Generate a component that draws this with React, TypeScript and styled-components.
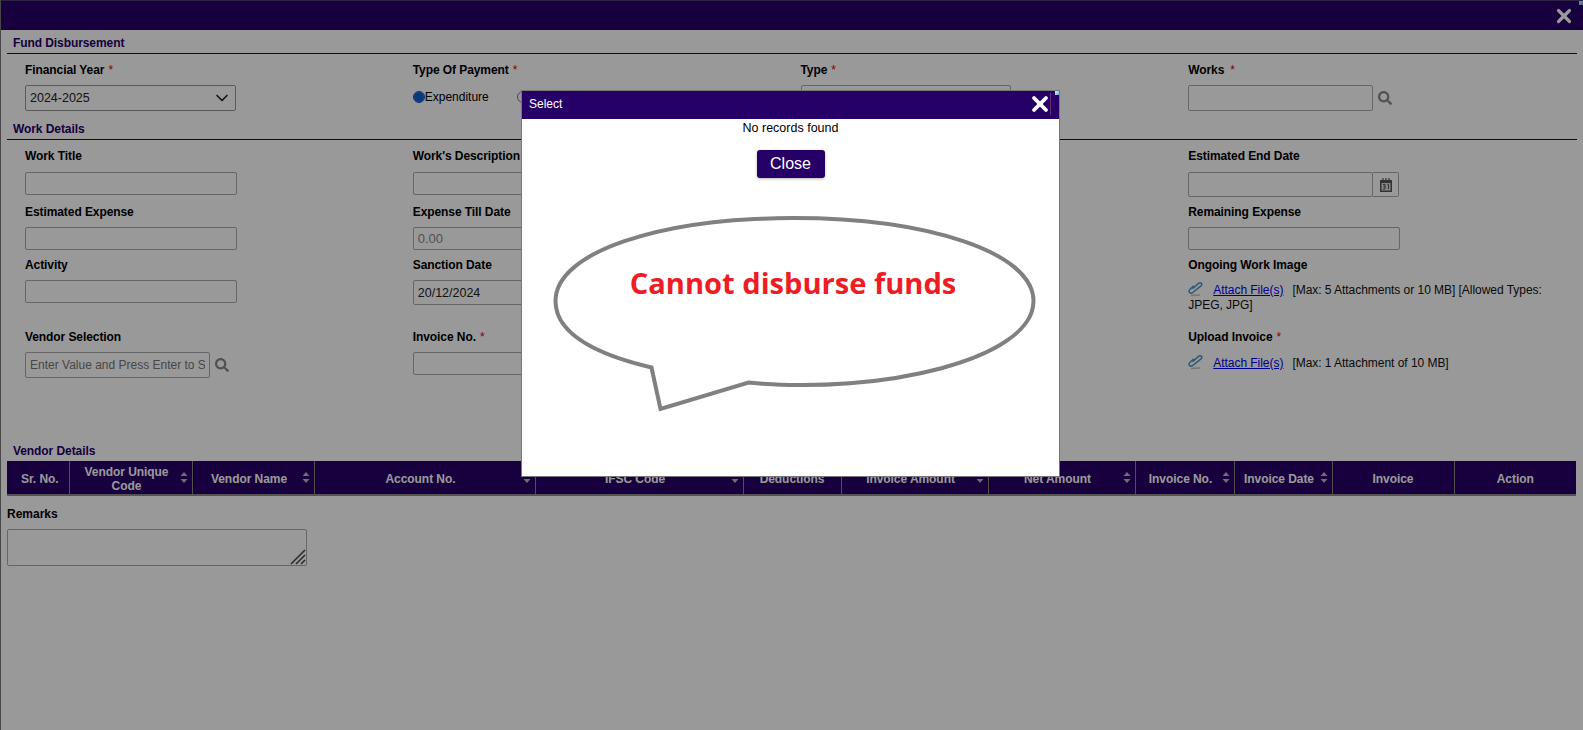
import React from 'react'
import styled, { createGlobalStyle } from 'styled-components'
import { ChevronDown, X } from 'lucide-react'
import { FaSearch } from 'react-icons/fa'

const GlobalStyle = createGlobalStyle`
  html, body { margin: 0; padding: 0; background: #fff; overflow: hidden; }
  * { box-sizing: border-box; }
  body { font-family: "Liberation Sans", Arial, sans-serif; font-size: 12px; color: #000; }
`

const Page = styled.div`
  height: 730px;
  border-left: 1px solid #777;
`

const TopBar = styled.div`
  position: relative;
  height: 30px;
  background: #270067;
  border-top: 1px solid #4a3a70;
  display: flex;
  align-items: center;
  justify-content: flex-end;
  padding-right: 8px;
  color: #fff;
`

const Body = styled.div`
  padding: 0 6px;
`

const SectionTitle = styled.div<{ $height: number; $ruled?: boolean }>`
  height: ${(p) => p.$height}px;
  display: flex;
  align-items: flex-end;
  padding: 0 0 3px 6px;
  font-weight: bold;
  letter-spacing: -0.08px;
  color: #270067;
  line-height: 14px;
  border-bottom: ${(p) => (p.$ruled ? '1px solid #270067' : 'none')};
`

const FieldRow = styled.div<{ $top: number; $height: number }>`
  display: grid;
  grid-template-columns: repeat(4, 387.75px);
  padding: ${(p) => p.$top}px 0 0 18px;
  height: ${(p) => p.$height}px;
`

const Field = styled.div`
  min-width: 0;
`

const Label = styled.label<{ $gap?: number }>`
  display: block;
  height: 15px;
  line-height: 15px;
  font-weight: bold;
  letter-spacing: -0.08px;
  margin-bottom: ${(p) => p.$gap ?? 8}px;
`

const Req = styled.span<{ $wide?: boolean }>`
  color: #d00;
  font-weight: normal;
  margin-left: ${(p) => (p.$wide ? 6 : 4)}px;
`

const Input = styled.input<{ $w?: number; $h?: number }>`
  display: block;
  width: ${(p) => p.$w ?? 212}px;
  height: ${(p) => p.$h ?? 23}px;
  border: 1px solid #aaa;
  border-radius: 2px;
  padding: 0 4px;
  font: 12.5px "Liberation Sans", Arial, sans-serif;
  color: #222;
  background: #fff;
  &::placeholder { color: #777; font-size: 12px; }
  &:disabled { color: #888; font-size: 13px; }
`

const InlineGroup = styled.div`
  display: flex;
  align-items: center;
`

const SelectBox = styled.div`
  width: 211px;
  height: 26px;
  border: 1px solid #999;
  border-radius: 2px;
  display: flex;
  align-items: center;
  justify-content: space-between;
  padding: 0 3px 0 4px;
  font-size: 12.5px;
  color: #222;
`

const RadioRow = styled.div`
  display: flex;
  align-items: center;
  height: 24px;
`

const Radio = styled.span<{ $on?: boolean }>`
  width: 12px;
  height: 12px;
  border-radius: 50%;
  flex: none;
  margin-left: ${(p) => (p.$on ? 0 : 28)}px;
  border: 1px solid ${(p) => (p.$on ? '#0a4fb0' : '#777')};
  background: ${(p) => (p.$on ? 'radial-gradient(circle, #0a5fd0 62%, #7fa8e0 72%)' : '#fff')};
`

const SearchBtn = styled.span`
  display: flex;
  margin-left: 5px;
  color: #888;
`

const DateAddon = styled.span`
  width: 26px;
  height: 25px;
  border: 1px solid #aaa;
  border-left: none;
  border-radius: 0 2px 2px 0;
  display: flex;
  align-items: center;
  justify-content: center;
  color: #555;
`

const AttachLine = styled.div`
  line-height: 15px;
  width: 375px;
  color: #111;
  letter-spacing: -0.04px;
`

const AttachLink = styled.a`
  color: #0000ee;
  text-decoration: underline;
  margin: 0 9px 0 8px;
`

const ClipMark = styled.svg`
  vertical-align: -3px;
`

const Table = styled.table`
  width: 1569px;
  height: 35px;
  table-layout: fixed;
  border-collapse: collapse;
  background: #270067;
  border-bottom: 1px solid #270067;
`

const Th = styled.th<{ $sort?: boolean }>`
  position: relative;
  height: 32px;
  padding: 2px ${(p) => (p.$sort ? 12 : 4)}px 0 4px;
  color: #fff;
  font-size: 12px;
  font-weight: bold;
  letter-spacing: -0.06px;
  line-height: 14px;
  text-align: center;
  border-right: 1px solid #88887a;
  border-bottom: 2px solid #8c8c8c;
  &:first-child { padding-left: 8px; }
  &:last-child { border-right: none; }
`

const SortMark = styled.svg`
  position: absolute;
  right: 4px;
  top: 11px;
`

const RemarksLabel = styled.div`
  margin-top: 11px;
  font-weight: bold;
  line-height: 15px;
`

const RemarksBox = styled.div`
  position: relative;
  width: 300px;
  height: 37px;
  margin-top: 7px;
`

const Remarks = styled.textarea`
  display: block;
  width: 100%;
  height: 100%;
  border: 1px solid #aaa;
  border-radius: 2px;
  background: #fff;
  resize: none;
`

const ResizeGrip = styled.svg`
  position: absolute;
  right: 1px;
  bottom: 1px;
`

const Overlay = styled.div`
  position: fixed;
  inset: 0;
  background: rgba(0, 0, 0, 0.4);
`

const Modal = styled.div`
  position: absolute;
  left: 521px;
  top: 90px;
  width: 539px;
  height: 387px;
  background: #fff;
  border: 1px solid #777;
  display: flex;
  flex-direction: column;
  align-items: center;
`

const ModalHeader = styled.div`
  align-self: stretch;
  height: 28px;
  background: #270067;
  color: #fff;
  display: flex;
  align-items: center;
  justify-content: space-between;
  padding: 0 8px 2px 7px;
  position: relative;
`

const HeaderRule = styled.span`
  height: 22px;
  border-right: 1px solid #6d2a70;
  display: flex;
  align-items: center;
  svg { margin-right: -2px; }
`

const CornerDot = styled.span`
  position: absolute;
  right: 0;
  top: 0;
  width: 4px;
  height: 4px;
  background: linear-gradient(135deg, #e4f1ff, #6aa8d8);
`

const NoRecords = styled.div`
  margin-top: 2px;
  font-size: 12.5px;
  line-height: 15px;
`

const CloseButton = styled.button`
  margin-top: 14px;
  width: 68px;
  height: 28px;
  border: none;
  border-radius: 3px;
  background: #270067;
  color: #fff;
  font: 16px "Liberation Sans", Arial, sans-serif;
  box-shadow: 0 1px 3px rgba(0, 0, 0, 0.3);
`

const Bubble = styled.div`
  position: relative;
  margin-top: 37px;
  width: 486px;
  height: 198px;
`

const BubbleShape = styled.svg`
  display: block;
  overflow: visible;
`

const BubbleText = styled.div`
  position: absolute;
  left: 5px;
  right: 0;
  top: 48px;
  text-align: center;
  font-family: "Open Sans", sans-serif;
  font-size: 29.1px;
  font-weight: 700;
  line-height: 40px;
  color: #ee1c25;
  white-space: nowrap;
`

const columns = [
  { name: 'Sr. No.', width: 62 },
  { name: 'Vendor Unique Code', width: 123, sort: true },
  { name: 'Vendor Name', width: 122, sort: true },
  { name: 'Account No.', width: 221, sort: true },
  { name: 'IFSC Code', width: 208, sort: true },
  { name: 'Deductions', width: 98 },
  { name: 'Invoice Amount', width: 147, sort: true },
  { name: 'Net Amount', width: 147, sort: true },
  { name: 'Invoice No.', width: 99, sort: true },
  { name: 'Invoice Date', width: 98, sort: true },
  { name: 'Invoice', width: 122 },
  { name: 'Action', width: 122 },
]

const SearchIcon = () => (
  <SearchBtn>
    <FaSearch size={14} />
  </SearchBtn>
)

const CalendarIcon = () => (
  <svg width="12" height="14" viewBox="0 0 12 14">
    <path d="M3 0v3M6 0v3M9 0v3" stroke="currentColor" strokeWidth="1.2" />
    <rect x="0" y="2" width="12" height="12" fill="currentColor" />
    <rect x="1.5" y="5" width="9" height="7.5" fill="#ddd" />
    <path d="M3 6.5h2v2H3.5M5 8.5v2.5H3M7.5 6.5h1v4.5" fill="none" stroke="currentColor" />
  </svg>
)

const PaperclipIcon = () => (
  <ClipMark width="17" height="16" viewBox="0 0 17 16">
    <path d="M3 14.500l9-.5" stroke="#888" strokeWidth="1.500" opacity="0.5" />
    <path
      transform="rotate(18 8 8)"
      d="M5 5.500l-2.600 4.600c-.9 1.600-.4 2.800.7 3.300 1.100.5 2.300 0 3.100-1.400L11.800 3.500c.7-1.300.3-2.300-.6-2.700-.9-.4-1.900 0-2.600 1.100L4.700 8.800"
      fill="none"
      stroke="#4d94c8"
      strokeWidth="1.500"
    />
  </ClipMark>
)

const SortIcon = () => (
  <SortMark width="8" height="11" viewBox="0 0 8 11">
    <path d="M4 0l3.500 4H.5zM4 11L.5 7h7z" fill="#b8b8b8" />
  </SortMark>
)

const App = () => {
  return (
    <>
      <GlobalStyle />
      <Page>
        <TopBar>
          <X size={22} strokeWidth={3.5} />
          <CornerDot />
        </TopBar>
        <Body>
          <SectionTitle $height={24} $ruled>Fund Disbursement</SectionTitle>
          <FieldRow $top={9} $height={58}>
            <Field>
              <Label $gap={7}>Financial Year<Req>*</Req></Label>
              <SelectBox>
                2024-2025
                <ChevronDown size={20} strokeWidth={2} />
              </SelectBox>
            </Field>
            <Field>
              <Label $gap={7}>Type Of Payment<Req>*</Req></Label>
              <RadioRow>
                <Radio $on />
                Expenditure
                <Radio />
              </RadioRow>
            </Field>
            <Field>
              <Label $gap={7}>Type<Req>*</Req></Label>
              <Input $w={210} $h={26} />
            </Field>
            <Field>
              <Label $gap={7}>Works<Req $wide>*</Req></Label>
              <InlineGroup>
                <Input $w={185} $h={26} />
                <SearchIcon />
              </InlineGroup>
            </Field>
          </FieldRow>
          <SectionTitle $height={28} $ruled>Work Details</SectionTitle>
          <FieldRow $top={9} $height={57}>
            <Field>
              <Label>Work Title</Label>
              <Input />
            </Field>
            <Field>
              <Label>Work's Description</Label>
              <Input />
            </Field>
            <Field />
            <Field>
              <Label>Estimated End Date</Label>
              <InlineGroup>
                <Input $w={185} $h={25} />
                <DateAddon><CalendarIcon /></DateAddon>
              </InlineGroup>
            </Field>
          </FieldRow>
          <FieldRow $top={8} $height={53}>
            <Field>
              <Label $gap={7}>Estimated Expense</Label>
              <Input />
            </Field>
            <Field>
              <Label $gap={7}>Expense Till Date</Label>
              <Input disabled value="0.00" readOnly />
            </Field>
            <Field />
            <Field>
              <Label $gap={7}>Remaining Expense</Label>
              <Input />
            </Field>
          </FieldRow>
          <FieldRow $top={8} $height={79}>
            <Field>
              <Label $gap={7}>Activity</Label>
              <Input />
            </Field>
            <Field>
              <Label $gap={7}>Sanction Date</Label>
              <Input $h={25} value="20/12/2024" readOnly />
            </Field>
            <Field />
            <Field>
              <Label $gap={8}>Ongoing Work Image</Label>
              <AttachLine>
                <PaperclipIcon />
                <AttachLink href="#">Attach File(s)</AttachLink>
                [Max: 5 Attachments or 10 MB] [Allowed Types: JPEG, JPG]
              </AttachLine>
            </Field>
          </FieldRow>
          <FieldRow $top={1} $height={109}>
            <Field>
              <Label $gap={7}>Vendor Selection</Label>
              <InlineGroup>
                <Input $w={185} $h={26} placeholder="Enter Value and Press Enter to Search" />
                <SearchIcon />
              </InlineGroup>
            </Field>
            <Field>
              <Label $gap={7}>Invoice No.<Req>*</Req></Label>
              <Input />
            </Field>
            <Field />
            <Field>
              <Label $gap={9}>Upload Invoice<Req>*</Req></Label>
              <AttachLine>
                <PaperclipIcon />
                <AttachLink href="#">Attach File(s)</AttachLink>
                [Max: 1 Attachment of 10 MB]
              </AttachLine>
            </Field>
          </FieldRow>
          <SectionTitle $height={23}>Vendor Details</SectionTitle>
          <Table>
            <colgroup>
              {columns.map((c) => (
                <col key={c.name} style={{ width: c.width }} />
              ))}
            </colgroup>
            <thead>
              <tr>
                {columns.map((c) => (
                  <Th key={c.name} $sort={c.sort}>
                    {c.name}
                    {c.sort && <SortIcon />}
                  </Th>
                ))}
              </tr>
            </thead>
          </Table>
          <RemarksLabel>Remarks</RemarksLabel>
          <RemarksBox>
            <Remarks />
            <ResizeGrip width="16" height="16" viewBox="0 0 16 16">
              <path d="M1 15L15 1M6 15L15 6M11 15l4-4" stroke="#444" strokeWidth="1.5" />
            </ResizeGrip>
          </RemarksBox>
        </Body>
      </Page>
      <Overlay />
      <Modal>
        <ModalHeader>
          Select
          <HeaderRule>
            <X size={24} strokeWidth={3.8} />
          </HeaderRule>
          <CornerDot />
        </ModalHeader>
        <NoRecords>No records found</NoRecords>
        <CloseButton>Close</CloseButton>
        <Bubble>
          <BubbleShape width="486" height="198" viewBox="0 0 486 198">
            <path
              d="M200.5 167.6 C 335 180 485.5 144 485.5 86 C 485.5 37 378 3 245.5 3 C 112 3 7.5 37 7.5 86 C 7.5 122 55 141 103.5 152.5 L 112.5 194 Z"
              fill="#fff"
              stroke="#808080"
              strokeWidth="4"
            />
          </BubbleShape>
          <BubbleText>Cannot disburse funds</BubbleText>
        </Bubble>
      </Modal>
    </>
  )
}

export default App
